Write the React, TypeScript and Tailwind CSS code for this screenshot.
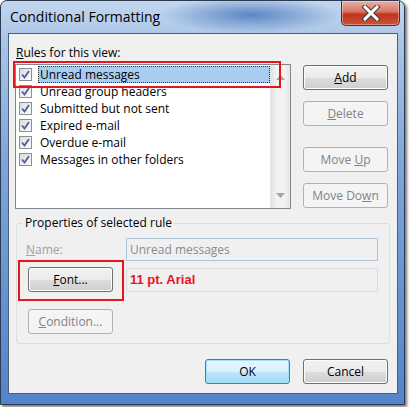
import type { ReactNode } from "react";

const ui = "font-['Open_Sans',sans-serif]";

function Btn({ children, disabled, primary, className = "" }: { children: ReactNode; disabled?: boolean; primary?: boolean; className?: string }) {
  const tone = disabled
    ? "border-[#adb2b5] bg-[#f4f4f4] text-[#838383]"
    : primary
      ? "border-[#3c7fb1] bg-[linear-gradient(#eaf6fd_0%,#d9f0fc_50%,#bee6fd_51%,#a7d9f5_100%)] text-black shadow-[inset_0_0_0_1px_#9fe2fb]"
      : "border-[#707070] bg-[linear-gradient(#f2f2f2_0%,#ebebeb_50%,#dddddd_51%,#cfcfcf_100%)] text-black shadow-[inset_0_0_0_1px_#fcfcfc]";
  return (
    <div className={`flex h-[25px] w-[85px] items-center justify-center rounded-[3px] border text-[12px] ${tone} ${className}`}>
      {children}
    </div>
  );
}

function Check() {
  return (
    <div className="flex h-[13px] w-[13px] shrink-0 items-center justify-center border border-[#8e8f8f] bg-[linear-gradient(135deg,#dcdcdc,#fdfdfd)]">
      <svg width="9" height="9" viewBox="0 0 9 9">
        <path d="M1 4.5 L3.5 7.5 L8 1" fill="none" stroke="#4a5f97" strokeWidth="1.8" />
      </svg>
    </div>
  );
}

const rules = [
  "Unread messages",
  "Unread group headers",
  "Submitted but not sent",
  "Expired e-mail",
  "Overdue e-mail",
  "Messages in other folders",
];

export default function App() {
  return (
    <div className={`relative h-[407px] w-[410px] overflow-hidden bg-white ${ui}`}>
      {/* window */}
      <div className="flex h-[405px] w-[405px] flex-col rounded-t-[7px] border border-[#2d3b50] bg-[radial-gradient(ellipse_90px_18px_at_250px_14px,#5c86c4,transparent),linear-gradient(#c3d7ee_0%,#a9c5e7_10%,#7fa6da_40%,#5383cb_100%)] shadow-[2px_2px_3px_rgba(0,0,0,0.55)]">
        <div className="flex h-[32px] shrink-0 items-start justify-between">
          <div className="pl-[9px] pt-[6px] text-[14px] leading-[20px] text-black">Conditional Formatting</div>
          <div className="mr-[4px] flex h-[25px] w-[59px] items-center justify-center rounded-b-[5px] border border-t-0 border-[#5d2a24] bg-[linear-gradient(#e8b1a6_0%,#d47563_45%,#c2341c_55%,#c9533c_100%)] shadow-[inset_0_0_0_1px_rgba(255,255,255,0.35)]">
            <svg width="20" height="16" viewBox="0 0 20 16">
              <path d="M4 2 L16 14 M16 2 L4 14" stroke="#3d3d3d" strokeWidth="5" strokeLinecap="square" />
              <path d="M4 2 L16 14 M16 2 L4 14" stroke="#ffffff" strokeWidth="3" strokeLinecap="square" />
            </svg>
          </div>
        </div>

        {/* client area */}
        <div className="ml-[7px] h-[361px] w-[390px] border border-[#4d5e78] bg-[#f0f0f0] pl-[6px] pt-[11px] text-[12px] leading-[16px] text-black">
          <div className="flex">
            <div className="w-[276px]">
              <div className="ml-[1px] h-[16px]">
                <span className="underline">R</span>ules for this view:
              </div>
              <div className="mt-[3px] flex h-[145px] border border-[#828790] bg-white">
                <div className="flex-1 pt-[1px]">
                  {rules.map((r, i) => (
                    <div key={r} className="flex h-[17px] items-center pl-[3px]">
                      <Check />
                      <span
                        className={`ml-[6px] flex h-[17px] flex-1 items-center px-[1px] ${
                          i === 0 ? "border border-dotted border-[#333] bg-[#a9cdf1]" : "border border-transparent"
                        }`}
                      >
                        {r}
                      </span>
                    </div>
                  ))}
                </div>
                <div className="flex w-[20px] flex-col items-center justify-between border-l border-[#e6e6e6] bg-[linear-gradient(90deg,#e3e3e3,#f2f2f2_30%,#f2f2f2_70%,#e6e6e6)] py-[10px]">
                  <svg width="9" height="5" viewBox="0 0 9 5">
                    <path d="M0 5 L4.5 0 L9 5 Z" fill="#a3a3a3" />
                  </svg>
                  <svg width="9" height="5" viewBox="0 0 9 5">
                    <path d="M0 0 L9 0 L4.5 5 Z" fill="#a3a3a3" />
                  </svg>
                </div>
              </div>
            </div>
            <div className="ml-[12px] mt-[20px] flex flex-col">
              <Btn>
                <span className="underline">A</span>dd
              </Btn>
              <Btn disabled className="mt-[11px]">
                <span className="underline">D</span>elete
              </Btn>
              <Btn disabled className="mt-[21px]">
                Move&nbsp;<span className="underline">U</span>p
              </Btn>
              <Btn disabled className="mt-[11px]">
                Move Do<span className="underline">w</span>n
              </Btn>
            </div>
          </div>

          {/* group box */}
          <div className="ml-[1px] mt-[14px] h-[121px] w-[374px] rounded-[3px] border border-[#d5dfe5] pl-[9px]">
            <div className="-ml-[3px] -mt-[9px] w-fit bg-[#f0f0f0] px-[2px]">Properties of selected rule</div>
            <div className="mt-[7px] flex h-[23px] items-center">
              <div className="w-[100px] text-[#a0a0a0]">
                <span className="underline">N</span>ame:
              </div>
              <div className="flex h-[23px] w-[252px] items-center border border-[#afc4d9] bg-[#f0f0f0] px-[3px] text-[#8a8a8a]">
                Unread messages
              </div>
            </div>
            <div className="mt-[6px] flex items-center">
              <Btn className="ml-[2px]">
                <span className="underline">F</span>ont...
              </Btn>
              <div className="ml-[13px] flex h-[24px] w-[252px] items-center border border-[#d9d9d9] px-[3px] font-['Liberation_Sans',Arial,sans-serif] text-[13px] font-bold text-[#e8141b]">
                11 pt. Arial
              </div>
            </div>
            <Btn disabled className="ml-[2px] mt-[17px]">
              <span className="underline">C</span>ondition...
            </Btn>
          </div>

          <div className="mt-[15px] flex justify-end pr-[9px]">
            <Btn primary>OK</Btn>
            <Btn className="ml-[13px]">Cancel</Btn>
          </div>
        </div>
      </div>

      {/* red annotation boxes */}
      <div className="absolute left-[13px] top-[61px] h-[27px] w-[268px] border-2 border-[#e8141b]" />
      <div className="absolute left-[18px] top-[260px] h-[41px] w-[106px] border-2 border-[#e8141b]" />
    </div>
  );
}
